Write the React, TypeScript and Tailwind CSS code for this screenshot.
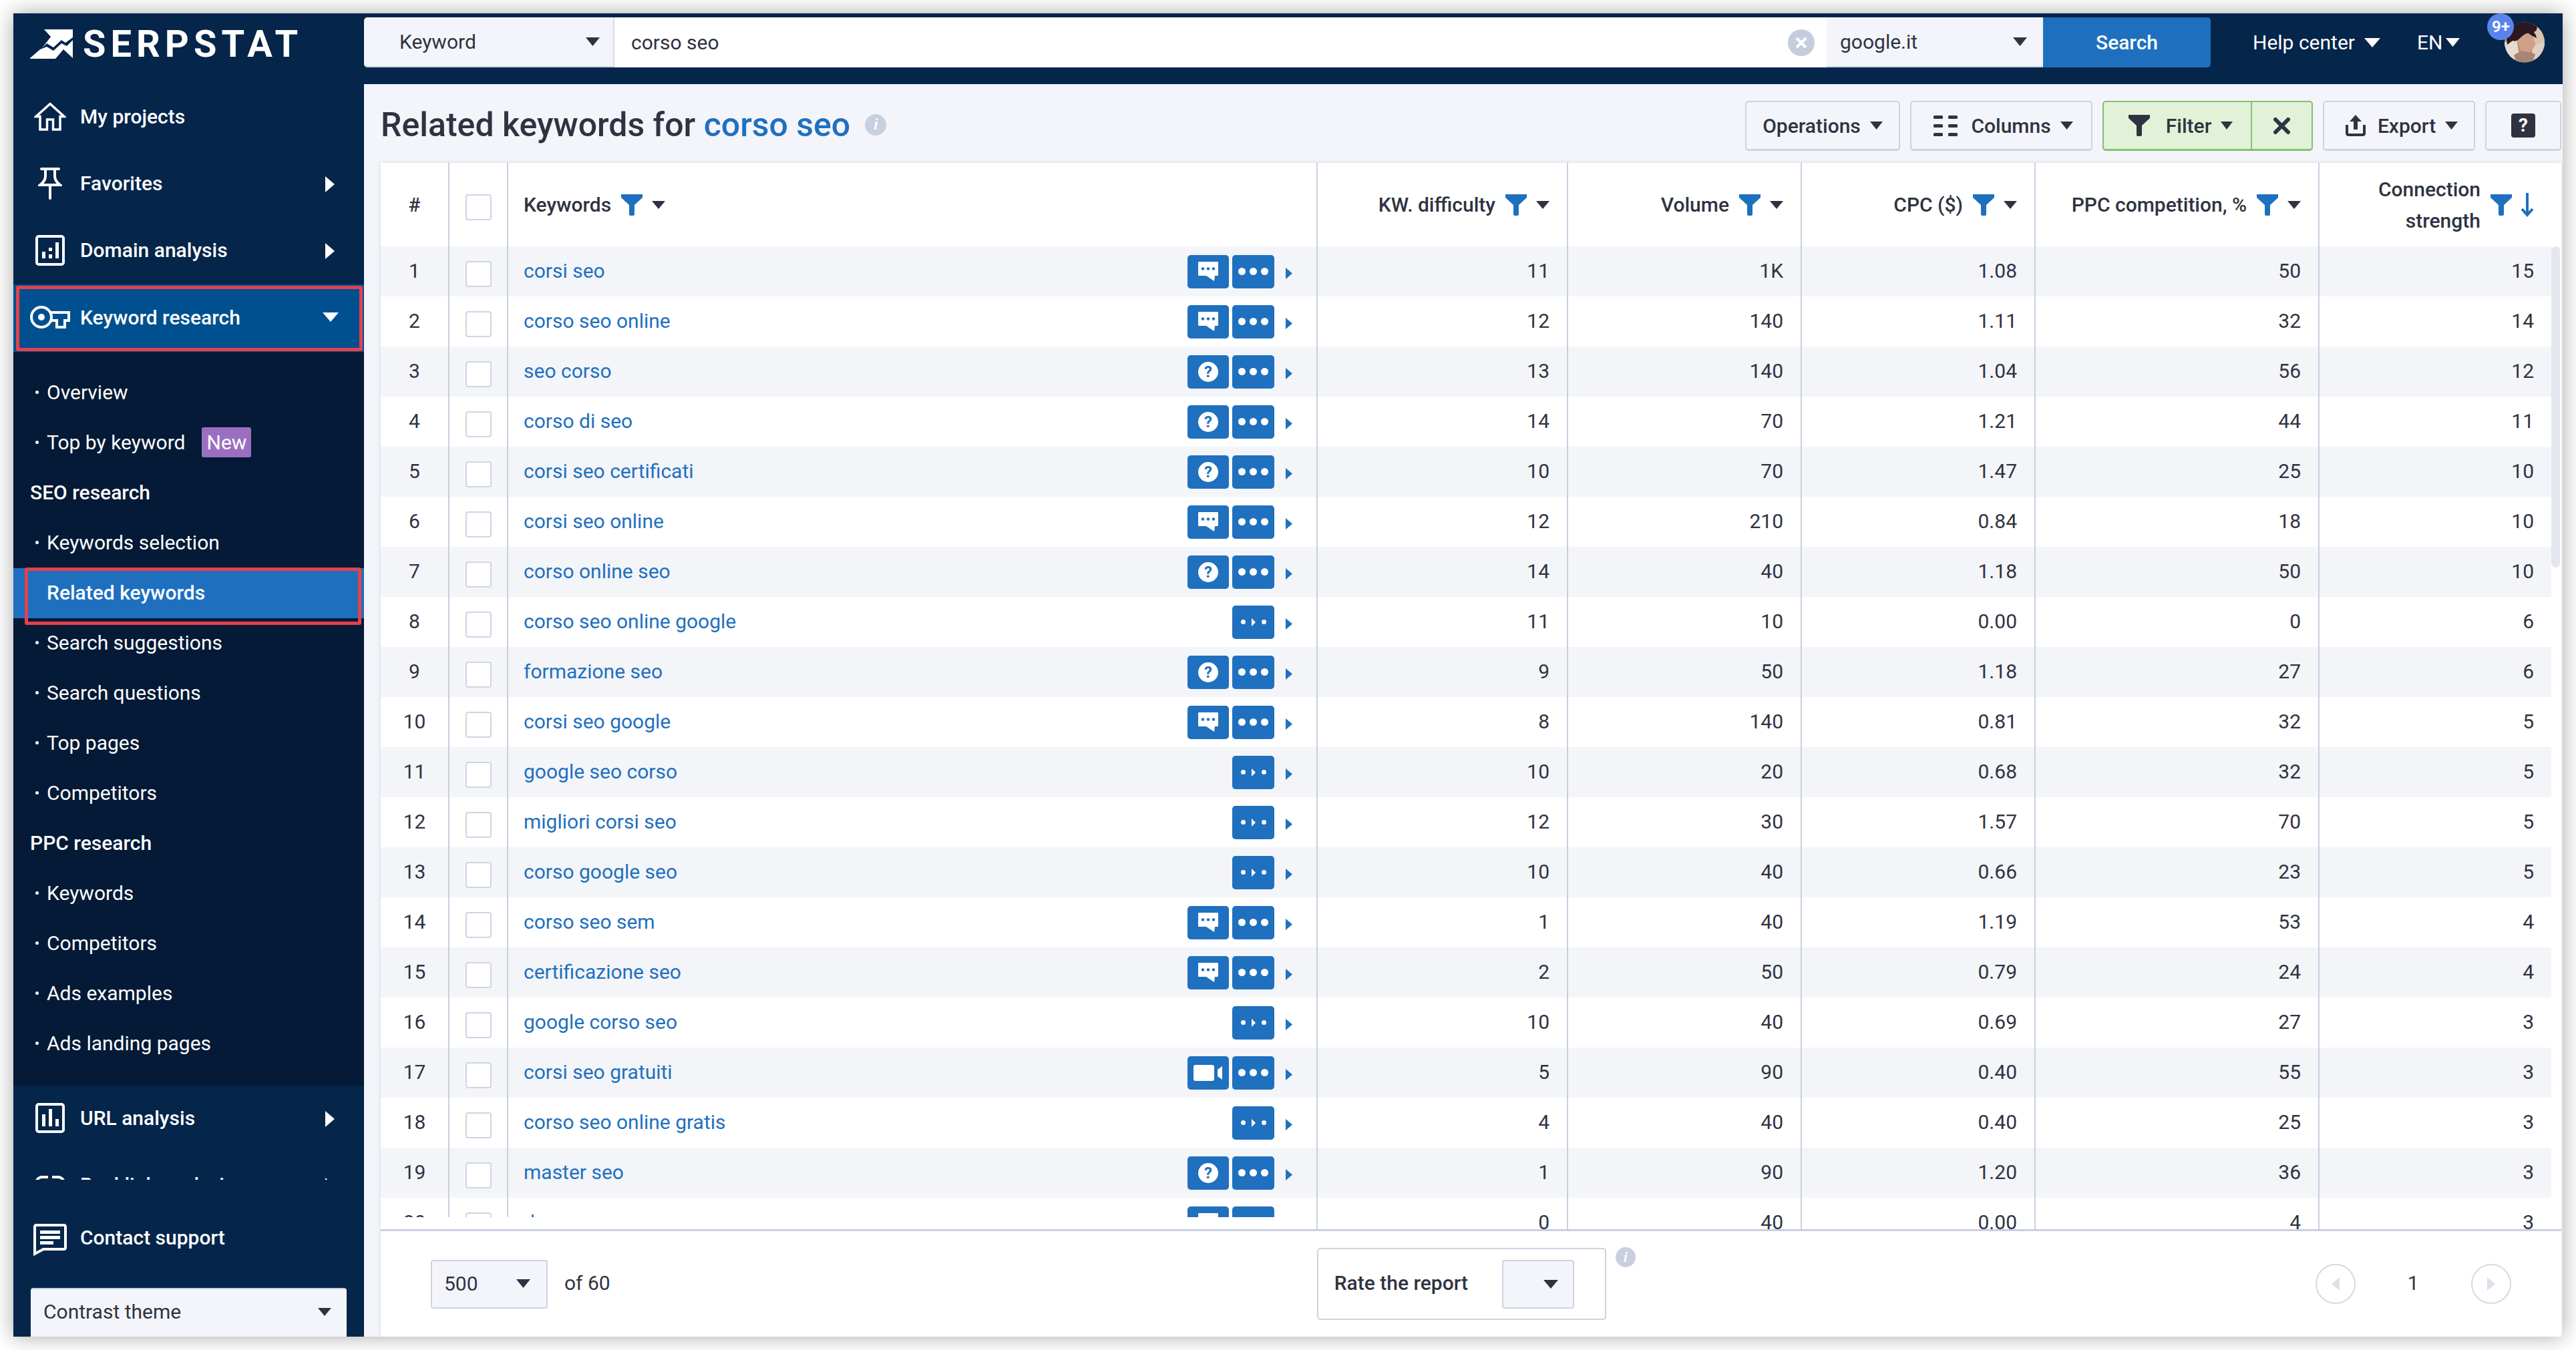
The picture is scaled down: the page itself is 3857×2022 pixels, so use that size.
import React from 'react';

type IconKind = 'chat' | 'question' | 'video' | 'none';

interface KeywordRow {
  keyword: string;
  icon: IconKind;
  difficulty: string;
  volume: string;
  cpc: string;
  ppc: string;
  strength: string;
}

const row = (keyword: string, icon: IconKind, difficulty: string, volume: string, cpc: string, ppc: string, strength: string): KeywordRow => ({
  keyword, icon, difficulty, volume, cpc, ppc, strength,
});

const rows: KeywordRow[] = [
  row('corsi seo', 'chat', '11', '1K', '1.08', '50', '15'),
  row('corso seo online', 'chat', '12', '140', '1.11', '32', '14'),
  row('seo corso', 'question', '13', '140', '1.04', '56', '12'),
  row('corso di seo', 'question', '14', '70', '1.21', '44', '11'),
  row('corsi seo certificati', 'question', '10', '70', '1.47', '25', '10'),
  row('corsi seo online', 'chat', '12', '210', '0.84', '18', '10'),
  row('corso online seo', 'question', '14', '40', '1.18', '50', '10'),
  row('corso seo online google', 'none', '11', '10', '0.00', '0', '6'),
  row('formazione seo', 'question', '9', '50', '1.18', '27', '6'),
  row('corsi seo google', 'chat', '8', '140', '0.81', '32', '5'),
  row('google seo corso', 'none', '10', '20', '0.68', '32', '5'),
  row('migliori corsi seo', 'none', '12', '30', '1.57', '70', '5'),
  row('corso google seo', 'none', '10', '40', '0.66', '23', '5'),
  row('corso seo sem', 'chat', '1', '40', '1.19', '53', '4'),
  row('certificazione seo', 'chat', '2', '50', '0.79', '24', '4'),
  row('google corso seo', 'none', '10', '40', '0.69', '27', '3'),
  row('corsi seo gratuiti', 'video', '5', '90', '0.40', '55', '3'),
  row('corso seo online gratis', 'none', '4', '40', '0.40', '25', '3'),
  row('master seo', 'question', '1', '90', '1.20', '36', '3'),
  row('dove seo', 'chat', '0', '40', '0.00', '4', '3'),
];

const CaretDown = ({ className = 'fill-[#2f3341]', w = 20, h = 12 }: { className?: string; w?: number; h?: number }) => (
  <svg width={w} height={h} viewBox="0 0 20 12" preserveAspectRatio="none" className={`shrink-0 ${className}`}>
    <path d="M0 0H20L10 12Z" />
  </svg>
);

const CaretRight = ({ w = 14, h = 24, className = 'fill-white' }: { w?: number; h?: number; className?: string }) => (
  <svg width={w} height={h} viewBox="0 0 14 24" preserveAspectRatio="none" className={`shrink-0 ${className}`}>
    <path d="M0 0L14 12L0 24Z" />
  </svg>
);

const FunnelIcon = ({ className = 'fill-[#1e70bf]', w = 32, h = 32 }: { className?: string; w?: number; h?: number }) => (
  <svg width={w} height={h} viewBox="0 0 32 32" className={`shrink-0 ${className}`}>
    <path d="M0 0H32V5L20 16V30C20 32 18 32 16 32C14 32 12 32 12 30V16L0 5Z" />
  </svg>
);

const HouseIcon = () => (
  <svg width="48" height="43" viewBox="0 0 48 43" fill="none" stroke="white" strokeWidth="3.500">
    <path d="M24 2.500L45 21.500H39V41H28.500V26H19.500V41H9V21.500H3Z" />
  </svg>
);

const PinIcon = () => (
  <svg width="36" height="49" viewBox="0 0 36 49" fill="none" stroke="white" strokeWidth="4" strokeLinecap="round">
    <path d="M5 3H31M11 3V14C11 20 7 24 3 27H33C29 24 25 20 25 14V3M18 27V47" />
  </svg>
);

const DomainIcon = () => (
  <svg width="44" height="46" viewBox="0 0 44 46" fill="white">
    <rect x="2" y="2" width="40" height="42" rx="3" fill="none" stroke="white" strokeWidth="4" />
    <rect x="10" y="25" width="5" height="10" />
    <rect x="20" y="19" width="5" height="5" />
    <rect x="20" y="29" width="5" height="6" />
    <rect x="30" y="11" width="5" height="24" />
  </svg>
);

const KeyIcon = () => (
  <svg width="60" height="36" viewBox="0 0 60 36" fill="none" stroke="white" strokeWidth="4">
    <circle cx="17" cy="18" r="15" />
    <circle cx="17" cy="18" r="5" fill="white" stroke="none" />
    <path d="M31 11H58V23H52V33H40V23H31" />
  </svg>
);

const UrlIcon = () => (
  <svg width="44" height="45" viewBox="0 0 44 45" fill="white">
    <rect x="2" y="2" width="40" height="41" rx="3" fill="none" stroke="white" strokeWidth="4" />
    <rect x="10" y="17" width="5" height="18" />
    <rect x="20" y="9" width="5" height="26" />
    <rect x="30" y="24" width="5" height="11" />
  </svg>
);

const LinkIcon = () => (
  <svg width="48" height="28" viewBox="0 0 48 28" fill="none" stroke="white" strokeWidth="4">
    <path d="M21 2H12C6 2 2 8 2 14C2 20 6 26 12 26H21M27 2H36C42 2 46 8 46 14C46 20 42 26 36 26H27" />
  </svg>
);

const SupportIcon = () => (
  <svg width="50" height="49" viewBox="0 0 50 49" fill="white" className="mt-[8px]">
    <path d="M4 2H46C47 2 48 3 48 4V36C48 37 47 38 46 38H15L2 45V4C2 3 3 2 4 2Z" fill="none" stroke="white" strokeWidth="4" />
    <rect x="10" y="10" width="30" height="5" />
    <rect x="10" y="18" width="30" height="5" />
    <rect x="10" y="26" width="20" height="5" />
  </svg>
);

const Logo = () => (
  <svg width="64" height="45" viewBox="0 0 64 45" fill="white" className="shrink-0">
    <path d="M21 1H64V13L53 21L47 17L35 28L25 22L18 29L31 12Z" />
    <path d="M0 44L15 31L25 27L35 33L47 22L55 26L64 17V44L50 31L38 45H0Z" />
  </svg>
);

const Avatar = () => (
  <svg width="60" height="61" viewBox="0 0 60 61" className="shrink-0">
    <defs>
      <clipPath id="avatar-clip">
        <circle cx="30" cy="30.500" r="30" />
      </clipPath>
    </defs>
    <g clipPath="url(#avatar-clip)">
      <rect width="60" height="61" fill="#b98f78" />
      <rect x="42" y="0" width="18" height="40" fill="#d9c4ad" />
      <path d="M0 30L18 26L24 61H0Z" fill="#e6dccf" />
      <path d="M42 36L60 30V61H40Z" fill="#dcd0c2" />
      <path d="M16 20L42 16L46 34L38 46L24 42Z" fill="#cf9f88" />
      <path d="M14 50C22 42 36 44 46 48L42 61H18Z" fill="#a98474" />
      <path d="M0 0H50L48 12C44 18 34 14 28 20C22 24 20 30 12 28L4 34Z" fill="#2c1820" />
      <path d="M30 12C36 10 46 12 48 24L40 20Z" fill="#2c1820" />
    </g>
  </svg>
);

const ActionBadge = ({ kind }: { kind: IconKind }) => {
  if (kind === 'chat') {
    return (
      <svg width="30" height="30" viewBox="0 0 30 30">
        <path d="M1 0H29C30 0 30 1 30 1V20C30 21 29 21 29 21H25L24 29L12 21H1C0 21 0 20 0 20V1C0 1 0 0 1 0Z" fill="white" />
        <circle cx="7" cy="10.500" r="2.200" fill="#1f70bf" />
        <circle cx="15" cy="10.500" r="2.200" fill="#1f70bf" />
        <circle cx="23" cy="10.500" r="2.200" fill="#1f70bf" />
      </svg>
    );
  }
  if (kind === 'question') {
    return (
      <span className="flex h-[30px] w-[30px] items-center justify-center rounded-full bg-white text-[24px] font-bold leading-none text-[#1f70bf]">?</span>
    );
  }
  if (kind === 'video') {
    return (
      <svg width="44" height="24" viewBox="0 0 44 24">
        <rect width="31" height="24" rx="3" fill="white" />
        <path d="M36 7L43 2V22L36 17Z" fill="white" />
      </svg>
    );
  }
  return null;
};

const RowActions = ({ kind }: { kind: IconKind }) => (
  <div className="ml-auto mr-[36px] flex items-center">
    {kind !== 'none' && (
      <span className="mr-[5px] flex h-[50px] w-[62px] items-center justify-center rounded-[5px] bg-[#1f70bf]">
        <ActionBadge kind={kind} />
      </span>
    )}
    <span className="flex h-[50px] w-[63px] items-center justify-center gap-[6px] rounded-[5px] bg-[#1f70bf]">
      {kind === 'none' ? (
        <>
          <span className="h-[7px] w-[7px] rounded-full bg-white" />
          <span className="mx-[3px]"><CaretRight w={6} h={12} /></span>
          <span className="h-[7px] w-[7px] rounded-full bg-white" />
        </>
      ) : (
        <>
          <span className="h-[11px] w-[11px] rounded-full bg-white" />
          <span className="h-[11px] w-[11px] rounded-full bg-white" />
          <span className="h-[11px] w-[11px] rounded-full bg-white" />
        </>
      )}
    </span>
    <span className="ml-[17px] mt-[6px] flex">
      <CaretRight w={10} h={17} className="fill-[#1f70bf]" />
    </span>
  </div>
);

const NavRow = ({ icon, label, arrow }: { icon: React.ReactNode; label: string; arrow?: boolean }) => (
  <div className="flex h-[100px] shrink-0 items-center pb-[3px] pl-[25px] text-[30px] font-medium text-white">
    <span className="mr-[15px] flex w-[60px] items-center justify-center">{icon}</span>
    {label}
    {arrow && (
      <span className="ml-auto mr-[44px] mt-[3px] flex">
        <CaretRight />
      </span>
    )}
  </div>
);

const SubRow = ({ label, badge }: { label: string; badge?: string }) => (
  <div className="flex h-[75px] shrink-0 items-center pb-[2px] pl-[33px] text-[30px] text-white">
    <span className="mr-[12px] h-[5px] w-[5px] rounded-full bg-white" />
    {label}
    {badge && (
      <span className="ml-[25px] flex h-[45px] w-[74px] items-center justify-center rounded-[3px] bg-[#9b6fc0] text-[30px]">{badge}</span>
    )}
  </div>
);

const SubHeading = ({ label }: { label: string }) => (
  <div className="flex h-[75px] shrink-0 items-center pb-[2px] pl-[25px] text-[30px] font-medium text-white">{label}</div>
);

const Sidebar = () => (
  <aside className="flex h-full w-[525px] shrink-0 flex-col overflow-hidden bg-[#05254a]">
    <div className="flex h-[106px] shrink-0 items-center gap-[15px] pb-[15px] pl-[25px]">
      <Logo />
      <span className="text-[56px] font-bold leading-none tracking-[7px] text-white">SERPSTAT</span>
    </div>
    <nav className="flex min-h-0 flex-1 flex-col overflow-hidden">
      <NavRow icon={<HouseIcon />} label="My projects" />
      <NavRow icon={<PinIcon />} label="Favorites" arrow />
      <NavRow icon={<DomainIcon />} label="Domain analysis" arrow />
      <div className="relative flex h-[101px] shrink-0 items-center bg-[#00508f] pb-[3px] pl-[25px] text-[30px] font-medium text-white">
        <span className="mr-[15px] flex w-[60px] items-center justify-center"><KeyIcon /></span>
        Keyword research
        <span className="ml-auto mr-[38px] flex">
          <CaretDown className="fill-white" w={24} h={14} />
        </span>
        <span className="absolute bottom-[1px] left-[4px] right-[2px] top-[2px] rounded-[3px] border-[5px] border-[#e5404c]" />
      </div>
      <div className="flex shrink-0 flex-col bg-[#041a36] pb-[25px] pt-[24px]">
        <SubRow label="Overview" />
        <SubRow label="Top by keyword" badge="New" />
        <SubHeading label="SEO research" />
        <SubRow label="Keywords selection" />
        <div className="relative flex h-[75px] shrink-0 items-center bg-[#1e70bf] pb-[2px] pl-[50px] text-[30px] font-medium text-white">
          Related keywords
          <span className="absolute bottom-[-10px] left-[17px] right-[4px] top-[-1px] z-10 rounded-[3px] border-[5px] border-[#e5404c]" />
        </div>
        <SubRow label="Search suggestions" />
        <SubRow label="Search questions" />
        <SubRow label="Top pages" />
        <SubRow label="Competitors" />
        <SubHeading label="PPC research" />
        <SubRow label="Keywords" />
        <SubRow label="Competitors" />
        <SubRow label="Ads examples" />
        <SubRow label="Ads landing pages" />
      </div>
      <NavRow icon={<UrlIcon />} label="URL analysis" arrow />
      <NavRow icon={<LinkIcon />} label="Backlink analysis" arrow />
    </nav>
    <div className="h-[235px] shrink-0 pt-[38px]">
      <NavRow icon={<SupportIcon />} label="Contact support" />
      <div className="mx-[26px] mt-[24px] flex h-[90px] rounded-t-[4px] border-t-2 border-[#c5cfe3] bg-[#f3f5fa] pl-[19px] pr-[23px] pt-[16px] text-[30px] leading-[36px] text-[#2f3341]">
        Contrast theme
        <span className="ml-auto mt-[12px]"><CaretDown /></span>
      </div>
    </div>
  </aside>
);

const TopBar = () => (
  <header className="flex h-[106px] shrink-0 items-start bg-[#05254a] pt-[6px] text-[30px] text-[#2f3341]">
    <div className="flex h-[75px] w-[373px] items-center justify-between rounded-l-[5px] border-b-2 border-[#c5cfe3] bg-[#f3f5fa] pl-[53px] pr-[20px]">
      Keyword
      <CaretDown w={21} h={13} />
    </div>
    <div className="flex h-[75px] w-[1817px] items-center justify-between border-l-2 border-[#d5dbe8] bg-white pl-[25px] pr-[18px]">
      corso seo
      <span className="flex h-[40px] w-[40px] items-center justify-center rounded-full bg-[#c5cddd]">
        <svg width="18" height="18" viewBox="0 0 18 18" stroke="white" strokeWidth="4">
          <path d="M2 2L16 16M16 2L2 16" />
        </svg>
      </span>
    </div>
    <div className="flex h-[75px] w-[324px] items-center justify-between border-b-2 border-[#c5cfe3] bg-[#f3f5fa] pl-[20px] pr-[24px]">
      google.it
      <CaretDown w={21} h={13} />
    </div>
    <div className="flex h-[75px] w-[251px] items-center justify-center rounded-r-[5px] bg-[#1e70bf] font-medium text-white">Search</div>
    <div className="ml-[63px] flex h-[75px] items-center text-white">
      Help center
      <span className="ml-[14px]"><CaretDown className="fill-white" w={24} h={14} /></span>
      <span className="ml-[55px]">EN</span>
      <span className="ml-[5px]"><CaretDown className="fill-white" w={21} h={13} /></span>
    </div>
    <div className="relative ml-[67px] mt-[7px]">
      <Avatar />
      <span className="absolute left-[-26px] top-[-13px] flex h-[40px] w-[40px] items-center justify-center rounded-full bg-[#5b84ea] text-[24px] font-semibold text-white">9+</span>
    </div>
  </header>
);

const ToolButton = ({ width, children }: { width: string; children: React.ReactNode }) => (
  <div className={`flex h-[75px] items-center justify-center rounded-[5px] border-2 border-b-[3px] border-[#ced3e0] bg-[#f3f5fa] text-[30px] font-medium text-[#2f3341] ${width}`}>
    {children}
  </div>
);

const ColumnsIcon = () => (
  <svg width="36" height="31" viewBox="0 0 36 31" fill="#2f3341">
    <rect x="0" y="0" width="14" height="5" rx="1.500" />
    <rect x="22" y="0" width="14" height="5" rx="1.500" />
    <rect x="0" y="13" width="14" height="5" rx="1.500" />
    <rect x="22" y="13" width="14" height="5" rx="1.500" />
    <rect x="0" y="26" width="14" height="5" rx="1.500" />
    <rect x="22" y="26" width="14" height="5" rx="1.500" />
  </svg>
);

const ExportIcon = () => (
  <svg width="30" height="32" viewBox="0 0 30 32" fill="#2f3341">
    <path d="M15 0L24 10H18V22H12V10H6Z" />
    <path d="M2 15V28C2 29 3 30 4 30H26C27 30 28 29 28 28V15" fill="none" stroke="#2f3341" strokeWidth="4" />
  </svg>
);

const TitleBar = () => (
  <div className="flex h-[118px] shrink-0 items-start pl-[25px] pr-[2px] pt-[25px]">
    <h1 className="flex h-[75px] items-center pb-[3px] text-[50px] font-medium text-[#2f3341]">
      Related keywords for&nbsp;<span className="text-[#1f70bf]">corso seo</span>
    </h1>
    <span className="ml-[22px] mt-[20px] flex h-[32px] w-[32px] items-center justify-center rounded-full bg-[#c8d0e0] text-[22px] font-bold italic leading-none text-white">i</span>
    <div className="ml-auto flex gap-[15px]">
      <ToolButton width="w-[232px]">
        Operations
        <span className="ml-[14px]"><CaretDown w={19} h={12} /></span>
      </ToolButton>
      <ToolButton width="w-[273px] pl-[6px]">
        <ColumnsIcon />
        <span className="ml-[20px]">Columns</span>
        <span className="ml-[14px]"><CaretDown w={19} h={12} /></span>
      </ToolButton>
      <div className="flex h-[75px] w-[315px] rounded-[5px] border-2 border-b-[3px] border-[#86bf72] bg-[#e1f2d8] text-[30px] font-medium text-[#2f3341]">
        <div className="flex w-[222px] items-center justify-center border-r-2 border-[#86bf72] pl-[10px]">
          <FunnelIcon className="fill-[#2f3341]" />
          <span className="ml-[24px]">Filter</span>
          <span className="ml-[14px]"><CaretDown w={18} h={12} /></span>
        </div>
        <div className="flex flex-1 items-center justify-center">
          <svg width="25" height="25" viewBox="0 0 25 25" stroke="#2f3341" strokeWidth="6" strokeLinecap="round">
            <path d="M3 3L22 22M22 3L3 22" />
          </svg>
        </div>
      </div>
      <ToolButton width="w-[228px] pl-[8px]">
        <ExportIcon />
        <span className="ml-[18px]">Export</span>
        <span className="ml-[14px]"><CaretDown w={19} h={12} /></span>
      </ToolButton>
      <ToolButton width="w-[114px]">
        <span className="flex h-[36px] w-[36px] items-center justify-center rounded-[4px] bg-[#2f3341] text-[28px] font-bold leading-none text-white">?</span>
      </ToolButton>
    </div>
  </div>
);

const Checkbox = ({ offset }: { offset: string }) => (
  <span className={`h-[39px] w-[39px] rounded-[4px] border-2 border-[#cfd5e3] bg-white ${offset}`} />
);

const stripe = (i: number) => (i % 2 === 0 ? 'bg-[#f3f5f9]' : 'bg-white');

const HeadTools = ({ sorted }: { sorted?: boolean }) => (
  <span className="ml-[15px] flex items-center">
    <FunnelIcon />
    {sorted ? (
      <svg width="20" height="36" viewBox="0 0 20 36" fill="none" stroke="#1e70bf" strokeWidth="4" className="ml-[13px]">
        <path d="M10 0V33M2 24L10 33L18 24" />
      </svg>
    ) : (
      <span className="ml-[14px]"><CaretDown w={20} h={12} /></span>
    )}
  </span>
);

const colWidths = ['w-[375px]', 'w-[350px]', 'w-[350px]', 'w-[425px]', 'w-[349px]'];

const LeftPane = () => (
  <div className="h-[1579px] w-[1401px] shrink-0 overflow-hidden">
    <div className="flex h-[125px] font-medium">
      <div className="flex w-[101px] items-center justify-center">#</div>
      <div className="flex w-[88px] items-center justify-center border-l-2 border-[#c9cfe0]">
        <Checkbox offset="mt-[7px]" />
      </div>
      <div className="flex w-[1212px] items-center border-l-2 border-[#c9cfe0] pl-[23px]">
        Keywords
        <HeadTools />
      </div>
    </div>
    {rows.map((r, i) => (
      <div key={i} className={`flex h-[75px] ${stripe(i)}`}>
        <div className="flex w-[101px] items-center justify-center pb-[3px]">{i + 1}</div>
        <div className="flex w-[88px] items-center justify-center border-l-2 border-[#c9cfe0]">
          <Checkbox offset="mt-[7px]" />
        </div>
        <div className="flex w-[1212px] items-center border-l-2 border-[#c9cfe0] pl-[23px]">
          <span className="pb-[3px] text-[#1f70bf]">{r.keyword}</span>
          <RowActions kind={r.icon} />
        </div>
      </div>
    ))}
  </div>
);

const RightPane = () => {
  const heads: React.ReactNode[] = ['KW. difficulty', 'Volume', 'CPC ($)', 'PPC competition, %'];
  return (
    <div className="h-full w-[1849px] shrink-0 overflow-hidden">
      <div className="flex h-[125px] font-medium">
        {heads.map((label, i) => (
          <div key={i} className={`flex items-center justify-end border-l-2 border-[#c9cfe0] pr-[26px] ${colWidths[i]}`}>
            {label}
            <HeadTools />
          </div>
        ))}
        <div className={`flex items-center justify-end border-l-2 border-[#c9cfe0] pr-[26px] ${colWidths[4]}`}>
          <span className="text-right leading-[47px]">Connection<br />strength</span>
          <HeadTools sorted />
        </div>
      </div>
      {rows.map((r, i) => (
        <div key={i} className={`flex h-[75px] ${stripe(i)}`}>
          {[r.difficulty, r.volume, r.cpc, r.ppc, r.strength].map((value, c) => (
            <div key={c} className={`flex items-center justify-end border-l-2 border-[#c9cfe0] pb-[3px] pr-[26px] ${colWidths[c]}`}>
              {value}
            </div>
          ))}
        </div>
      ))}
    </div>
  );
};

const Pager = ({ left }: { left?: boolean }) => (
  <span className="flex h-[60px] w-[60px] items-center justify-center rounded-full border-2 border-[#d5d9e2]">
    <span className={left ? 'flex rotate-180' : 'flex'}>
      <CaretRight w={12} h={20} className="fill-[#dde0ea]" />
    </span>
  </span>
);

const Footer = () => (
  <div className="flex min-h-0 flex-1 items-center border-t-[3px] border-[#c9cfe0] bg-white text-[30px]">
    <div className="ml-[75px] flex h-[73px] w-[175px] items-center justify-between rounded-[4px] border-2 border-[#ced3e0] bg-[#f3f5fa] pb-[2px] pl-[18px] pr-[24px]">
      500
      <CaretDown w={21} h={13} />
    </div>
    <span className="ml-[25px] pb-[3px]">of 60</span>
    <div className="ml-[1058px] flex h-[108px] w-[433px] items-center rounded-[5px] border-2 border-[#ced3e0] pl-[24px]">
      <span className="pb-[3px] font-medium">Rate the report</span>
      <div className="ml-[51px] flex h-[73px] w-[108px] items-center justify-end rounded-[4px] border-2 border-[#ced3e0] bg-[#f3f5fa] pr-[22px]">
        <CaretDown w={22} h={13} />
      </div>
    </div>
    <span className="mb-[80px] ml-[14px] flex h-[30px] w-[30px] items-center justify-center rounded-full bg-[#c8d0e0] text-[20px] font-bold italic leading-none text-white">i</span>
    <div className="ml-[1018px] flex items-center">
      <Pager left />
      <span className="w-[173px] pb-[3px] text-center">1</span>
      <Pager />
    </div>
  </div>
);

export default function App() {
  return (
    <div className="h-[2022px] w-[3857px] overflow-hidden bg-white p-[20px] font-[family-name:Roboto,sans-serif]">
      <div className="flex h-full w-full overflow-hidden shadow-[0_0_30px_rgba(0,0,0,0.35)]">
        <Sidebar />
        <div className="flex min-w-0 flex-1 flex-col">
          <TopBar />
          <main className="flex min-h-0 flex-1 flex-col bg-[#f3f5fa]">
            <TitleBar />
            <div className="ml-[25px] mr-[2px] flex min-h-0 flex-1 flex-col bg-white text-[30px] text-[#2f3341] shadow-[0_0_6px_rgba(120,130,160,0.25)]">
              <div className="flex h-[1597px] shrink-0">
                <LeftPane />
                <RightPane />
                <div className="w-[15px] shrink-0 pt-[125px]">
                  <div className="h-[481px] w-[13px] rounded-full bg-[#e4e7ee]" />
                </div>
              </div>
              <Footer />
            </div>
          </main>
        </div>
      </div>
    </div>
  );
}
